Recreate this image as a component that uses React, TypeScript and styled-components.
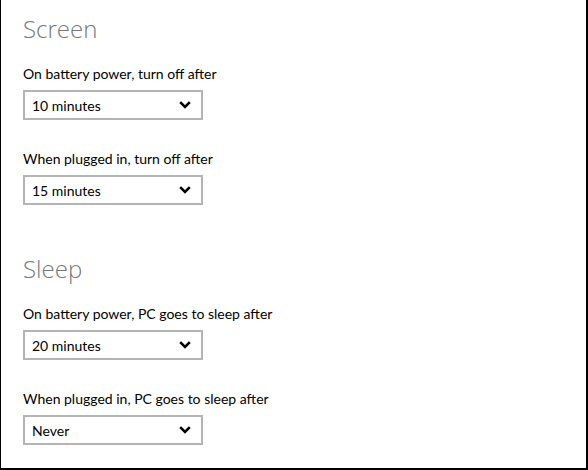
import React from "react";
import styled, { createGlobalStyle } from "styled-components";

const Global = createGlobalStyle`
  html, body { margin: 0; padding: 0; background: #fff; }
  body { font-family: Lato, "Open Sans", sans-serif; }
`;

const Frame = styled.div`
  box-sizing: border-box;
  width: 588px;
  height: 470px;
  background: #fff;
  border-left: 1px solid #000;
  border-right: 2px solid #000;
  border-bottom: 2px solid #000;
  padding: 13px 0 0 22px;
  display: flex;
  flex-direction: column;
  overflow: hidden;
`;

const Section = styled.section<{ $gapTop?: number }>`
  display: flex;
  flex-direction: column;
  margin-top: ${(p) => p.$gapTop ?? 0}px;
`;

const Heading = styled.h2`
  margin: 0 0 19px 0;
  font-family: "Open Sans", sans-serif;
  font-weight: 300;
  font-size: 24px;
  line-height: 32px;
  color: #777;
`;

const Field = styled.div`
  display: flex;
  flex-direction: column;
  gap: 6px;
  margin-bottom: 29px;
`;

const Label = styled.div`
  font-size: 14px;
  line-height: 20px;
  color: #000;
`;

const Select = styled.div`
  box-sizing: border-box;
  width: 180px;
  height: 30px;
  border: 2px solid #b4b4b4;
  display: flex;
  align-items: center;
  justify-content: space-between;
  padding: 0 10px 0 7px;
  font-size: 14px;
  color: #000;
`;

const Chevron = () => (
  <svg width="12" height="8" viewBox="0 0 12 8">
    <polyline points="1.2,1.2 6,6 10.8,1.2" fill="none" stroke="#000" strokeWidth="2.6" />
  </svg>
);

const Dropdown = ({ label, value }: { label: string; value: string }) => (
  <Field>
    <Label>{label}</Label>
    <Select>
      <span>{value}</span>
      <Chevron />
    </Select>
  </Field>
);

export default function App() {
  return (
    <>
      <Global />
      <Frame>
        <Section>
          <Heading>Screen</Heading>
          <Dropdown label="On battery power, turn off after" value="10 minutes" />
          <Dropdown label="When plugged in, turn off after" value="15 minutes" />
        </Section>
        <Section $gapTop={19}>
          <Heading>Sleep</Heading>
          <Dropdown label="On battery power, PC goes to sleep after" value="20 minutes" />
          <Dropdown label="When plugged in, PC goes to sleep after" value="Never" />
        </Section>
      </Frame>
    </>
  );
}
